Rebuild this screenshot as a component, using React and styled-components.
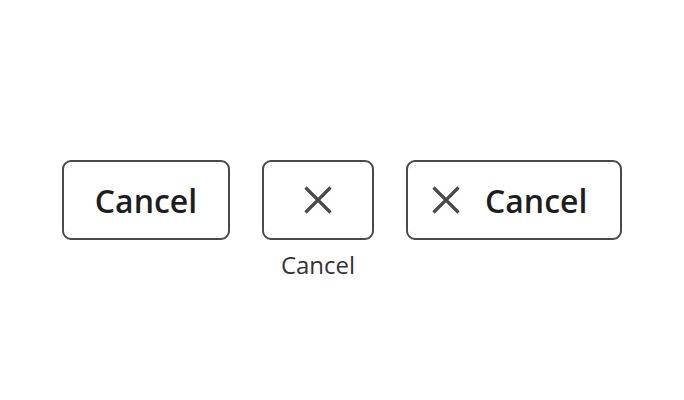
import styled, { createGlobalStyle } from "styled-components";

const GlobalStyle = createGlobalStyle`
  html, body {
    margin: 0;
    padding: 0;
    background: #ffffff;
  }
  body {
    font-family: "Open Sans", "Liberation Sans", sans-serif;
  }
`;

const Page = styled.div`
  width: 100vw;
  height: 100vh;
  display: flex;
  justify-content: center;
  align-items: center;
`;

const Row = styled.div`
  display: flex;
  align-items: center;
  gap: 32px;
`;

const Slot = styled.div`
  position: relative;
  display: flex;
  flex-direction: column;
  align-items: center;
`;

const Button = styled.button`
  box-sizing: border-box;
  height: 80px;
  width: ${(p) => p.$width}px;
  display: flex;
  align-items: center;
  justify-content: ${(p) => (p.$between ? "flex-start" : "center")};
  gap: 25px;
  padding: ${(p) => (p.$between ? "0 0 0 24px" : "0")};
  background: #ffffff;
  border: 2px solid #4a4a4a;
  border-radius: 9px;
  font-family: "Open Sans", "Liberation Sans", sans-serif;
  font-weight: 600;
  font-size: 32px;
  color: #1e1e1e;
  cursor: pointer;
`;

const Caption = styled.span`
  position: absolute;
  top: 88px;
  font-size: 24px;
  color: #333333;
  white-space: nowrap;
`;

const CloseIcon = () => (
  <svg width="28" height="28" viewBox="0 0 28 28" fill="none">
    <path d="M1.5 1.5 L26.5 26.5 M26.5 1.5 L1.5 26.5" stroke="#4a4a4a" strokeWidth="3.2" />
  </svg>
);

export default function App() {
  return (
    <>
      <GlobalStyle />
      <Page>
        <Row>
          <Button $width={168}>Cancel</Button>
          <Slot>
            <Button $width={112} aria-label="Cancel">
              <CloseIcon />
            </Button>
            <Caption>Cancel</Caption>
          </Slot>
          <Button $width={216} $between>
            <CloseIcon />
            Cancel
          </Button>
        </Row>
      </Page>
    </>
  );
}
